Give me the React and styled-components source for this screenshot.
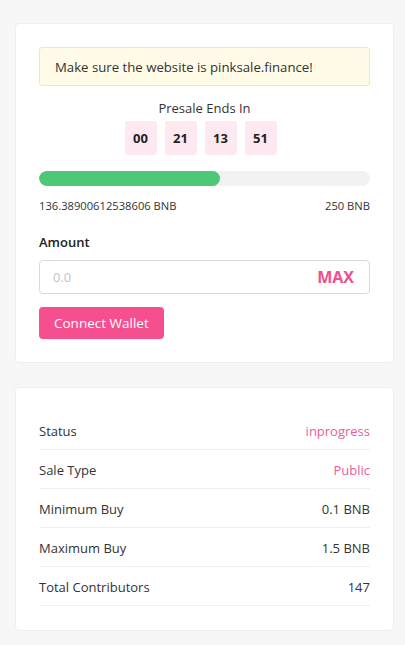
import React from 'react';
import styled, { createGlobalStyle } from 'styled-components';

const GlobalStyle = createGlobalStyle`
  * { box-sizing: border-box; }
  body {
    margin: 0;
    background: #f7f7f7;
    font-family: 'Open Sans', 'Noto Sans', sans-serif;
    color: #222;
  }
`;

const Page = styled.div`
  display: flex;
  flex-direction: column;
  gap: 24px;
  padding: 23px 11px 14px 15px;
`;

const Card = styled.div`
  background: #fff;
  border: 1px solid #efefef;
  border-radius: 4px;
  padding: 23px 23px ${(p) => p.bottom || 23}px;
`;

const Alert = styled.div`
  background: #fffbe6;
  border: 1px solid #fbe7a4;
  border-radius: 3px;
  height: 39px;
  display: flex;
  align-items: center;
  padding: 0 15px;
  font-size: 13.2px;
  color: #333;
`;

const Countdown = styled.div`
  margin-top: 13px;
  display: flex;
  flex-direction: column;
  align-items: center;
  gap: 4px;
  font-size: 13px;
  color: #333;
`;

const Boxes = styled.div`
  display: flex;
`;

const TimeBox = styled.div`
  width: 32px;
  height: 34px;
  margin-right: 8px;
  border-radius: 3px;
  background: #fde9ef;
  display: flex;
  align-items: center;
  justify-content: center;
  font-weight: 700;
  font-size: 13px;
  color: #1f1f1f;
`;

const Track = styled.div`
  margin-top: 16px;
  height: 15px;
  border-radius: 8px;
  background: #f2f2f2;
  overflow: hidden;
`;

const Fill = styled.div`
  height: 100%;
  border-radius: 8px;
  background: #4cc877;
`;

const Amounts = styled.div`
  display: flex;
  justify-content: space-between;
  margin-top: 12px;
  font-size: 11.2px;
  color: #333;
`;

const Label = styled.div`
  margin-top: 20px;
  font-size: 13px;
  font-weight: 600;
  color: #222;
`;

const InputWrap = styled.div`
  margin-top: 9px;
  height: 34px;
  border: 1px solid #d9d9d9;
  border-radius: 4px;
  display: flex;
  align-items: center;
  padding: 0 15px 0 11px;
`;

const Input = styled.input`
  flex: 1;
  min-width: 0;
  border: none;
  outline: none;
  font: inherit;
  font-size: 13px;
  color: #333;
  &::placeholder {
    color: #c4c4c4;
  }
`;

const MaxButton = styled.span`
  font-size: 16px;
  font-weight: 700;
  color: #f0508c;
`;

const ConnectButton = styled.button`
  display: block;
  margin-top: 13px;
  height: 32px;
  padding: 0 15px;
  border: none;
  border-radius: 4px;
  background: #f64f8f;
  color: #fff;
  font: inherit;
  font-size: 13.5px;
`;

const Row = styled.div`
  display: flex;
  justify-content: space-between;
  align-items: center;
  height: 39px;
  border-bottom: 1px solid #efefef;
  padding-top: 2px;
  font-size: 13px;
  color: #333;
`;

const Value = styled.span`
  color: ${(p) => (p.$pink ? '#ec5e97' : '#333')};
`;

const raised = 136.38900612538606;
const cap = 250;

const info = [
  ['Status', 'inprogress', true],
  ['Sale Type', 'Public', true],
  ['Minimum Buy', '0.1 BNB'],
  ['Maximum Buy', '1.5 BNB'],
  ['Total Contributors', '147'],
];

const App = () => {
  return (
    <>
      <GlobalStyle />
      <Page>
        <Card>
          <Alert>Make sure the website is pinksale.finance!</Alert>
          <Countdown>
            Presale Ends In
            <Boxes>
              {['00', '21', '13', '51'].map((t, i) => (
                <TimeBox key={i}>{t}</TimeBox>
              ))}
            </Boxes>
          </Countdown>
          <Track>
            <Fill style={{ width: `${(raised / cap) * 100}%` }} />
          </Track>
          <Amounts>
            <span>{raised} BNB</span>
            <span>{cap} BNB</span>
          </Amounts>
          <Label>Amount</Label>
          <InputWrap>
            <Input placeholder="0.0" />
            <MaxButton>MAX</MaxButton>
          </InputWrap>
          <ConnectButton>Connect Wallet</ConnectButton>
        </Card>
        <Card bottom={24}>
          {info.map(([k, v, pink]) => (
            <Row key={k}>
              <span>{k}</span>
              <Value $pink={pink}>{v}</Value>
            </Row>
          ))}
        </Card>
      </Page>
    </>
  );
};

export default App;
